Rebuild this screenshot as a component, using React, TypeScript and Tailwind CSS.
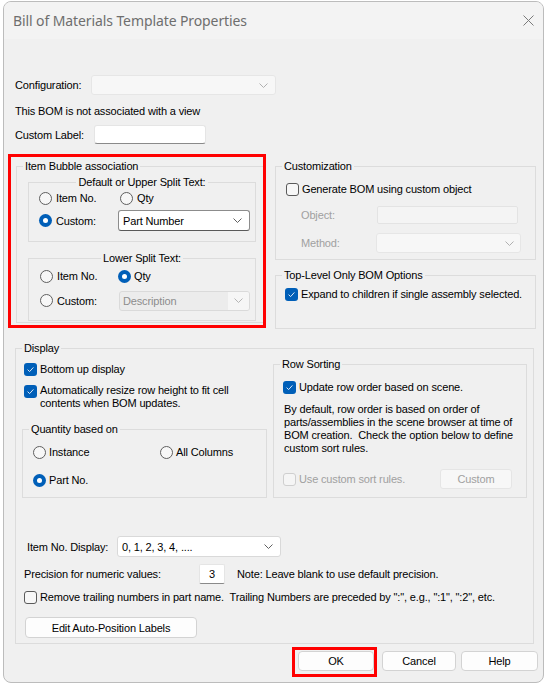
import React from "react";

const F = "font-['Liberation_Sans',Arial,sans-serif]";

function Check({ checked = false, disabled = false }: { checked?: boolean; disabled?: boolean }) {
  if (checked)
    return (
      <span className="w-[13px] h-[13px] rounded-[3px] bg-[#005fb8] flex items-center justify-center shrink-0">
        <svg width="9" height="9" viewBox="0 0 9 9">
          <path d="M1.6 4.6 L3.6 6.6 L7.4 2.4" stroke="#dbe8f6" strokeWidth="1" fill="none" />
        </svg>
      </span>
    );
  return (
    <span
      className={
        disabled
          ? "w-[13px] h-[13px] rounded-[3px] border border-[#cfcfcf] bg-[#f5f5f5] shrink-0"
          : "w-[13px] h-[13px] rounded-[3px] border border-[#5a5a5a] bg-[#f7f7f7] shrink-0"
      }
    />
  );
}

function Radio({ checked = false }: { checked?: boolean }) {
  if (checked)
    return (
      <span className="w-[13px] h-[13px] rounded-full bg-[#005fb8] flex items-center justify-center shrink-0">
        <span className="w-[5px] h-[5px] rounded-full bg-white" />
      </span>
    );
  return <span className="w-[13px] h-[13px] rounded-full border border-[#5f5f5f] bg-[#f7f7f7] shrink-0" />;
}

function Chevron({ color = "#606060" }: { color?: string }) {
  return (
    <svg width="9" height="5" viewBox="0 0 9 5" className="shrink-0">
      <path d="M0.5 0.5 L4.5 4.5 L8.5 0.5" stroke={color} strokeWidth="1" fill="none" />
    </svg>
  );
}

export default function App() {
  return (
    <div className={`relative w-[546px] h-[684px] bg-white overflow-hidden text-[11px] leading-[14px] tracking-[-0.15px] text-black ${F}`}>
      <div className="ml-[3px] mt-[1px] w-[541px] h-[682px] border border-[#bcbcbc] rounded-[8px] bg-[#f0f0f0] overflow-hidden flex flex-col">
        {/* Title bar */}
        <div className="h-[37px] bg-[#f3f3f3] flex items-center justify-between pl-[9px] pr-[9px] shrink-0">
          <span className="font-['Noto_Sans',sans-serif] text-[14px] text-[#6e6e6e] tracking-[-0.1px]">
            Bill of Materials Template Properties
          </span>
          <svg width="11" height="11" viewBox="0 0 11 11">
            <path d="M0.5 0.5 L10.5 10.5 M10.5 0.5 L0.5 10.5" stroke="#7a7a7a" strokeWidth="1" />
          </svg>
        </div>

        {/* Body */}
        <div className="flex flex-col">
          {/* Configuration */}
          <div className="mt-[36px] pl-[11px] flex items-center h-[20px]">
            <span className="w-[76px]">Configuration:</span>
            <div className="w-[185px] h-[20px] rounded-[3px] border border-[#e6e6e6] bg-[#f7f7f7] flex items-center justify-end pr-[7px]">
              <Chevron color="#b0b0b0" />
            </div>
          </div>
          <div className="mt-[9px] pl-[11px]">This BOM is not associated with a view</div>
          <div className="mt-[7px] pl-[11px] flex items-center h-[19px]">
            <span className="w-[79px]">Custom Label:</span>
            <div className="w-[112px] h-[19px] rounded-[3px] border border-[#e5e5e5] border-b-[#8a8a8a] bg-white" />
          </div>

          {/* Middle */}
          <div className="mt-[15px] pl-[12px] flex items-start gap-[9px]">
            <fieldset className="w-[250px] h-[164px] border border-[#dcdcdc] px-0">
              <legend className="ml-[6px] px-[2px] leading-[14px]">Item Bubble association</legend>
              <fieldset className="mt-[2px] ml-[11px] w-[228px] h-[67px] border border-[#dcdcdc] px-0">
                <legend className="mx-auto px-[2px] leading-[14px]">Default or Upper Split Text:</legend>
                <div className="mt-[1px] h-[16px] flex items-center pl-[10px]">
                  <div className="w-[81px] flex items-center gap-[4px]">
                    <Radio />
                    <span>Item No.</span>
                  </div>
                  <div className="flex items-center gap-[4px]">
                    <Radio />
                    <span>Qty</span>
                  </div>
                </div>
                <div className="mt-[4px] h-[21px] flex items-center pl-[10px]">
                  <div className="w-[79px] flex items-center gap-[4px]">
                    <Radio checked />
                    <span>Custom:</span>
                  </div>
                  <div className="w-[132px] h-[21px] rounded-[3px] border border-[#8c8c8c] border-b-[#5a5a5a] bg-white flex items-center justify-between pl-[4px] pr-[7px]">
                    <span>Part Number</span>
                    <Chevron />
                  </div>
                </div>
              </fieldset>
              <fieldset className="mt-[9px] ml-[11px] w-[228px] h-[70px] border border-[#dcdcdc] px-0">
                <legend className="mx-auto px-[2px] leading-[14px]">Lower Split Text:</legend>
                <div className="mt-[3px] h-[16px] flex items-center pl-[11px]">
                  <div className="w-[78px] flex items-center gap-[4px]">
                    <Radio />
                    <span>Item No.</span>
                  </div>
                  <div className="flex items-center gap-[3px]">
                    <Radio checked />
                    <span>Qty</span>
                  </div>
                </div>
                <div className="mt-[6px] h-[21px] flex items-center pl-[11px]">
                  <div className="w-[79px] flex items-center gap-[4px]">
                    <Radio />
                    <span>Custom:</span>
                  </div>
                  <div className="w-[131px] h-[20px] rounded-[3px] border border-[#dadada] bg-[#ececec] flex items-center overflow-hidden">
                    <span className="flex-1 pl-[3px] text-[#8d8d8d]">Description</span>
                    <span className="w-[21px] h-full bg-[#f6f6f6] flex items-center justify-center">
                      <Chevron color="#b5b5b5" />
                    </span>
                  </div>
                </div>
              </fieldset>
            </fieldset>

            <div className="w-[261px] flex flex-col">
              <fieldset className="h-[101px] border border-[#dcdcdc] px-0">
                <legend className="ml-[6px] px-[2px] leading-[14px]">Customization</legend>
                <div className="mt-[8px] h-[16px] flex items-center pl-[10px] gap-[3px]">
                  <Check />
                  <span>Generate BOM using custom object</span>
                </div>
                <div className="mt-[9px] h-[18px] flex items-center pl-[25px]">
                  <span className="w-[76px] text-[#a0a0a0]">Object:</span>
                  <div className="w-[141px] h-[18px] rounded-[2px] border border-[#e3e3e3] bg-[#f4f4f4]" />
                </div>
                <div className="mt-[9px] h-[20px] flex items-center pl-[25px]">
                  <span className="w-[75px] text-[#a0a0a0]">Method:</span>
                  <div className="w-[145px] h-[20px] rounded-[3px] border border-[#e6e6e6] bg-[#f7f7f7] flex items-center justify-end pr-[6px]">
                    <Chevron color="#b0b0b0" />
                  </div>
                </div>
              </fieldset>
              <fieldset className="mt-[8px] h-[61px] border border-[#dcdcdc] px-0">
                <legend className="ml-[6px] px-[2px] leading-[14px]">Top-Level Only BOM Options</legend>
                <div className="mt-[4px] h-[16px] flex items-center pl-[9px] gap-[3px]">
                  <Check checked />
                  <span>Expand to children if single assembly selected.</span>
                </div>
              </fieldset>
            </div>
          </div>

          {/* Display */}
          <fieldset className="mt-[12px] ml-[11px] w-[519px] h-[303px] border border-[#dcdcdc] px-0">
            <legend className="ml-[6px] px-[2px] leading-[14px]">Display</legend>
            <div className="flex items-start">
              <div className="w-[257px] flex flex-col">
                <div className="mt-[6px] h-[16px] flex items-center pl-[8px] gap-[3px]">
                  <Check checked />
                  <span>Bottom up display</span>
                </div>
                <div className="mt-[7px] flex items-start pl-[8px] gap-[3px]">
                  <span className="mt-[1px]">
                    <Check checked />
                  </span>
                  <span className="leading-[13px]">
                    Automatically resize row height to fit cell
                    <br />
                    contents when BOM updates.
                  </span>
                </div>
                <fieldset className="mt-[12px] ml-[6px] w-[245px] h-[76px] border border-[#dcdcdc] px-0">
                  <legend className="ml-[6px] px-[2px] leading-[14px]">Quantity based on</legend>
                  <div className="mt-[8px] h-[16px] flex items-center pl-[10px]">
                    <div className="w-[127px] flex items-center gap-[3px]">
                      <Radio />
                      <span>Instance</span>
                    </div>
                    <div className="flex items-center gap-[3px]">
                      <Radio />
                      <span>All Columns</span>
                    </div>
                  </div>
                  <div className="mt-[12px] h-[16px] flex items-center pl-[10px] gap-[3px]">
                    <Radio checked />
                    <span>Part No.</span>
                  </div>
                </fieldset>
              </div>

              <fieldset className="mt-[2px] w-[254px] h-[141px] border border-[#dcdcdc] px-0">
                <legend className="ml-[6px] px-[2px] leading-[14px]">Row Sorting</legend>
                <div className="mt-[8px] h-[16px] flex items-center pl-[9px] gap-[3px]">
                  <Check checked />
                  <span>Update row order based on scene.</span>
                </div>
                <div className="mt-[8px] pl-[10px] leading-[13px] whitespace-pre">
                  {"By default, row order is based on order of\nparts/assemblies in the scene browser at time of\nBOM creation.  Check the option below to define\ncustom sort rules."}
                </div>
                <div className="mt-[14px] h-[20px] flex items-center pl-[9px]">
                  <div className="w-[157px] flex items-center gap-[3px]">
                    <Check disabled />
                    <span className="text-[#a0a0a0]">Use custom sort rules.</span>
                  </div>
                  <div className="w-[72px] h-[20px] rounded-[3px] border border-[#e5e5e5] bg-[#f7f7f7] flex items-center justify-center text-[#a0a0a0]">
                    Custom
                  </div>
                </div>
              </fieldset>
            </div>

            <div className="mt-[38px] h-[21px] flex items-center pl-[11px]">
              <span className="w-[90px]">Item No. Display:</span>
              <div className="w-[164px] h-[21px] rounded-[3px] border border-[#d9d9d9] bg-white flex items-center justify-between pl-[4px] pr-[7px]">
                <span>0, 1, 2, 3, 4, ....</span>
                <Chevron />
              </div>
            </div>
            <div className="mt-[7px] h-[20px] flex items-center pl-[8px]">
              <span className="w-[175px]">Precision for numeric values:</span>
              <div className="w-[26px] h-[20px] rounded-[2px] border border-[#e5e5e5] border-b-[#8a8a8a] bg-white flex items-center justify-center">
                3
              </div>
              <span className="ml-[12px]">Note: Leave blank to use default precision.</span>
            </div>
            <div className="mt-[5px] h-[16px] flex items-center pl-[8px] gap-[3px]">
              <Check />
              <span className="whitespace-pre">
                {'Remove trailing numbers in part name.  Trailing Numbers are preceded by ":", e.g., ":1", ":2", etc.'}
              </span>
            </div>
            <div className="mt-[12px] ml-[9px] w-[172px] h-[21px] rounded-[4px] border border-[#d3d3d3] bg-[#fdfdfd] flex items-center justify-center">
              Edit Auto-Position Labels
            </div>
          </fieldset>

          {/* Buttons */}
          <div className="mt-[7px] flex items-center pl-[294px]">
            <div className="w-[76px] h-[20px] rounded-[4px] border border-[#d3d3d3] bg-[#fdfdfd] flex items-center justify-center">OK</div>
            <div className="ml-[8px] w-[74px] h-[20px] rounded-[4px] border border-[#d3d3d3] bg-[#fdfdfd] flex items-center justify-center">Cancel</div>
            <div className="ml-[5px] w-[77px] h-[20px] rounded-[4px] border border-[#d3d3d3] bg-[#fdfdfd] flex items-center justify-center">Help</div>
          </div>
        </div>
      </div>

      {/* Red annotation boxes */}
      <div className="absolute left-[8px] top-[154px] w-[258px] h-[174px] border-[3px] border-[#ff0000] pointer-events-none" />
      <div className="absolute left-[292px] top-[647px] w-[85px] h-[30px] border-[3px] border-[#ff0000] pointer-events-none" />
    </div>
  );
}
